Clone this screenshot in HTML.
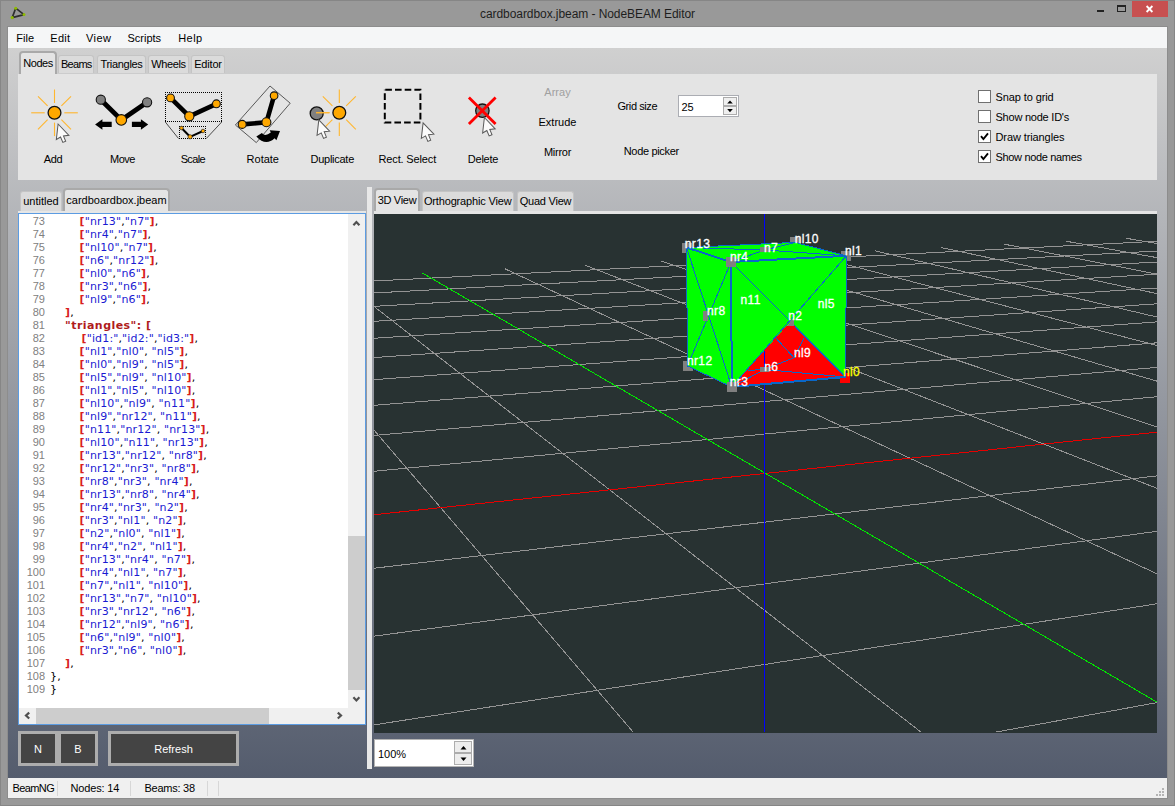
<!DOCTYPE html>
<html lang="en"><head><meta charset="utf-8"><title>cardboardbox.jbeam - NodeBEAM Editor</title>
<style>
*{box-sizing:border-box}
html,body{margin:0;padding:0}
body{width:1175px;height:806px;overflow:hidden;background:#999999;font-family:"Liberation Sans",sans-serif;font-size:11px;color:#000;position:relative;line-height:13px}
.abs{position:absolute}
#frame{left:0;top:0;width:1175px;height:806px;border:1px solid #868686;pointer-events:none}
#title{left:0;top:7px;width:1175px;text-align:center;font-size:12px;line-height:15px;color:#1e1e1e;letter-spacing:-0.07px}
#close{left:1132px;top:1px;width:36px;height:16px;background:#c75050}
#menubar{left:8px;top:27px;width:1159px;height:21px;background:#f5f6f7}
#menubar span{position:absolute;top:5px;font-size:11px}
#central{left:8px;top:48px;width:1159px;height:730px;background:linear-gradient(#d0d0d0,#545c6d)}
#status{left:8px;top:778px;width:1159px;height:20px;background:#f0f0f0}
#status span{position:absolute;top:4px}
#status i.gd{width:2px;height:2px;background:#b4b4b4;top:auto}
#status i{position:absolute;top:3px;width:1px;height:15px;background:#d7d7d7}
/* top tab widget */
.tab{position:absolute;border:1px solid #c4c4c4;border-bottom:none;border-radius:3px 3px 0 0;background:#dbdbdb;text-align:center;white-space:nowrap}
.tab.sel{background:#e4e4e4;border:2px solid #a9a9a9;border-bottom:none;border-radius:4px 4px 0 0}
#pane{left:18px;top:74px;width:1139px;height:106px;background:#e4e4e4}
.tl{position:absolute;text-align:center;white-space:nowrap;width:100px;line-height:13px}
.sb{width:14px;height:9px;border:1px solid #acacac;background:#efefef}
.cb{position:absolute;width:13px;height:13px;background:#fff;border:1px solid #707070}
.cbl{position:absolute;white-space:nowrap}
/* editor */
#editor{left:18px;top:213px;width:348px;height:512px;background:#fff;border:1px solid #5c9ce2;overflow:hidden}
.ln{position:absolute;left:0;height:13px;width:330px;white-space:pre;font-family:"DejaVu Sans","Liberation Sans",sans-serif;font-size:11px;line-height:13px;letter-spacing:0.15px}
.no{position:absolute;left:0;width:26px;text-align:right;color:#808080;font-family:"Liberation Sans",sans-serif;font-size:11px;letter-spacing:0}
.ct{position:absolute;top:0}
.s{color:#1a1ad2}
.br{color:#d81e1e}
.k{color:#b01c1c;letter-spacing:0.45px}
.sb2{width:18px;border:1px solid #adadad;background:#ededed}
.dbtn{position:absolute;background:#444;border:3px solid #adadad;color:#fff;text-align:center;line-height:31px;height:35px;top:731px}
#view{left:374px;top:214px;width:783px;height:519px;background:#283232;overflow:hidden}
</style></head>
<body>
<div class="abs" id="title">cardboardbox.jbeam - NodeBEAM Editor</div>
<svg class="abs" style="left:10px;top:5px" width="18" height="16" viewBox="0 0 18 16">
<path d="M5.7 3.2 L14 9.6 L2.2 12.6 Z" fill="none" stroke="#2e2e2e" stroke-width="1.7" stroke-linejoin="round"/>
<circle cx="5.7" cy="3.2" r="1.5" fill="#8fbc00"/><circle cx="14" cy="9.6" r="1.5" fill="#8fbc00"/><circle cx="2.2" cy="12.6" r="1.6" fill="#8fbc00"/>
</svg>
<div class="abs" style="left:1097px;top:10px;width:7px;height:2px;background:#222"></div>
<div class="abs" style="left:1117px;top:5px;width:9px;height:7px;border:1px solid #222;border-top-width:2px"></div>
<div class="abs" id="close"><svg width="36" height="16" viewBox="0 0 36 16"><path d="M14.6 5 L20.4 11 M20.4 5 L14.6 11" stroke="#fff" stroke-width="1.8"/></svg></div>

<div class="abs" style="left:7px;top:26px;width:1161px;height:773px;background:#8d8d8d"></div>
<div class="abs" id="menubar">
<span style="left:8.3px">File</span><span style="left:42.3px;letter-spacing:0.25px">Edit</span><span style="left:78px;letter-spacing:0.45px">View</span><span style="left:119.5px">Scripts</span><span style="left:170.2px;letter-spacing:0.45px">Help</span>
</div>
<div class="abs" id="central"></div>

<!-- top tabs -->
<div class="tab sel" style="left:19px;top:51px;width:38px;height:23px;line-height:20px;letter-spacing:-0.48px">Nodes</div>
<div class="tab" style="left:58.3px;top:55px;width:36px;height:18px;line-height:17px;letter-spacing:-0.7px">Beams</div>
<div class="tab" style="left:97px;top:55px;width:49px;height:18px;line-height:17px;letter-spacing:-0.3px">Triangles</div>
<div class="tab" style="left:148px;top:55px;width:41px;height:18px;line-height:17px;letter-spacing:-0.37px">Wheels</div>
<div class="tab" style="left:191px;top:55px;width:34px;height:18px;line-height:17px;letter-spacing:-0.17px">Editor</div>
<div class="abs" id="pane">
<svg class="abs" style="left:0;top:0" width="1139" height="106" viewBox="18 74 1139 106">
<g stroke="#ffb62e" stroke-width="1.1"><line x1="64.3" y1="112.8" x2="77.8" y2="112.8"/><line x1="61.4" y1="119.7" x2="71.0" y2="129.3"/><line x1="54.5" y1="122.6" x2="54.5" y2="136.1"/><line x1="47.6" y1="119.7" x2="38.0" y2="129.3"/><line x1="44.7" y1="112.8" x2="31.2" y2="112.8"/><line x1="47.6" y1="105.9" x2="38.0" y2="96.3"/><line x1="54.5" y1="103.0" x2="54.5" y2="89.5"/><line x1="61.4" y1="105.9" x2="71.0" y2="96.3"/></g>
<circle cx="54.5" cy="112.8" r="6.4" fill="#ffa800" stroke="#111" stroke-width="1.3"/>
<path transform="translate(58.1 124.0) rotate(6.5)" d="M0.00 0.00 L0.00 15.60 L3.90 12.60 L6.80 17.80 L9.50 16.30 L6.70 11.20 L12.00 10.00 Z" fill="#fbfbfb" stroke="#5a5a5a" stroke-width="1" stroke-linejoin="miter"/>
<path d="M100.8 99.7 L121.3 119.9 L147.1 102.3" fill="none" stroke="#000" stroke-width="4.8" stroke-linejoin="round"/>
<circle cx="100.8" cy="99.7" r="4.6" fill="#808080" stroke="#111" stroke-width="1.1"/>
<circle cx="147.1" cy="102.3" r="4.6" fill="#808080" stroke="#111" stroke-width="1.1"/>
<circle cx="121.3" cy="119.9" r="5.3" fill="#ffa800" stroke="#111" stroke-width="1.1"/>
<path d="M95.1 124.4 L102.4 119.2 L102.4 121.8 L111.7 121.8 L111.7 127 L102.4 127 L102.4 129.8 Z" fill="#000"/>
<path d="M148.2 124.4 L140.9 119.2 L140.9 121.8 L131.9 121.8 L131.9 127 L140.9 127 L140.9 129.8 Z" fill="#000"/>
<path d="M165 92.5 H222 M165 121.5 H222 M165.5 92 V122 M221.5 92 V122" fill="none" stroke="#000" stroke-width="1" stroke-dasharray="1 1" shape-rendering="crispEdges"/>
<path d="M165.3 122 L178.5 138.5 M221.7 122 L206.3 138.5" stroke="#222" stroke-width="0.8" fill="none"/>
<path d="M179 126.5 H206 M179 138.5 H206 M179.5 126 V139 M205.5 126 V139" fill="none" stroke="#000" stroke-width="1" stroke-dasharray="1 1" shape-rendering="crispEdges"/>
<path d="M170.5 97.9 L189.3 116.3 L216.4 103.8" fill="none" stroke="#000" stroke-width="4.6" stroke-linejoin="round"/>
<circle cx="170.5" cy="97.9" r="3.9" fill="#ffa800" stroke="#111" stroke-width="1.1"/>
<circle cx="216.4" cy="103.8" r="3.9" fill="#ffa800" stroke="#111" stroke-width="1.1"/>
<circle cx="189.3" cy="116.3" r="4.6" fill="#ffa800" stroke="#111" stroke-width="1.1"/>
<path d="M181.5 128 L190.1 136.8 L203 131" fill="none" stroke="#000" stroke-width="2" stroke-linejoin="round"/>
<circle cx="181.5" cy="128.0" r="1.8" fill="#ffa800" stroke="#111" stroke-width="0.6"/>
<circle cx="203.0" cy="131.0" r="1.8" fill="#ffa800" stroke="#111" stroke-width="0.6"/>
<circle cx="190.1" cy="136.8" r="2.1" fill="#ffa800" stroke="#111" stroke-width="0.6"/>
<path d="M270 86 L290.2 103.2 L256.3 142.6 L235.4 125 Z" fill="none" stroke="#333" stroke-width="0.8"/>
<path d="M274.1 95.7 L266.4 122.3 L242.2 124.4" fill="none" stroke="#000" stroke-width="4.6" stroke-linejoin="round"/>
<circle cx="274.1" cy="95.7" r="3.8" fill="#ffa800" stroke="#111" stroke-width="1.1"/>
<circle cx="266.4" cy="122.3" r="4.5" fill="#ffa800" stroke="#111" stroke-width="1.1"/>
<circle cx="242.2" cy="124.4" r="4.0" fill="#ffa800" stroke="#111" stroke-width="1.1"/>
<path d="M256.3 136.4 L261.9 133 Q264.85 137 270.8 132.6 L269.7 130.2 L280 131 L276.4 140.3 L274.6 138.2 Q265.75 146.6 256.3 136.4 Z" fill="#000"/>
<circle cx="316.7" cy="113.4" r="6.5" fill="#808080" stroke="#111" stroke-width="1.3"/>
<g stroke="#ffb62e" stroke-width="1.1"><line x1="346.2" y1="119.7" x2="355.8" y2="129.3"/><line x1="339.3" y1="122.6" x2="339.3" y2="136.1"/><line x1="332.4" y1="119.7" x2="322.8" y2="129.3"/><line x1="329.5" y1="112.8" x2="316.0" y2="112.8"/><line x1="332.4" y1="105.9" x2="322.8" y2="96.3"/><line x1="339.3" y1="103.0" x2="339.3" y2="89.5"/><line x1="346.2" y1="105.9" x2="355.8" y2="96.3"/></g>
<line x1="316.2" y1="112.6" x2="329.6" y2="112.6" stroke="#ffb62e" stroke-width="1.1"/>
<circle cx="339.3" cy="112.8" r="6.4" fill="#ffa800" stroke="#111" stroke-width="1.3"/>
<path transform="translate(318.8 119.9) rotate(6.5)" d="M0.00 0.00 L0.00 15.60 L3.90 12.60 L6.80 17.80 L9.50 16.30 L6.70 11.20 L12.00 10.00 Z" fill="#fbfbfb" stroke="#5a5a5a" stroke-width="1" stroke-linejoin="miter"/>
<rect x="384.8" y="89.7" width="35.6" height="32.8" fill="none" stroke="#000" stroke-width="2" stroke-dasharray="6.6 3.1" stroke-dashoffset="-0.5"/>
<path transform="translate(423.1 122.9) rotate(6.5)" d="M0.00 0.00 L0.00 15.60 L3.90 12.60 L6.80 17.80 L9.50 16.30 L6.70 11.20 L12.00 10.00 Z" fill="#fbfbfb" stroke="#5a5a5a" stroke-width="1" stroke-linejoin="miter"/>
<circle cx="482.4" cy="110.7" r="6.7" fill="#808080" stroke="#111" stroke-width="1.3"/>
<path d="M468.9 97.5 L495.6 124 M495.6 97.5 L468.9 124" stroke="#ff0000" stroke-width="2.8"/>
<path transform="translate(484.4 117.5) rotate(6.5)" d="M0.00 0.00 L0.00 15.60 L3.90 12.60 L6.80 17.80 L9.50 16.30 L6.70 11.20 L12.00 10.00 Z" fill="#fbfbfb" stroke="#5a5a5a" stroke-width="1" stroke-linejoin="miter"/>
</svg>
<div class="tl" style="left:-14.9px;top:78.8px;width:100px;letter-spacing:-0.3px">Add</div>
<div class="tl" style="left:54.5px;top:78.8px;width:100px;letter-spacing:-0.5px">Move</div>
<div class="tl" style="left:124.9px;top:78.8px;width:100px;letter-spacing:-0.6px">Scale</div>
<div class="tl" style="left:194.8px;top:78.8px;width:100px">Rotate</div>
<div class="tl" style="left:264.3px;top:78.8px;width:100px;letter-spacing:-0.27px">Duplicate</div>
<div class="tl" style="left:339.3px;top:78.8px;width:100px;letter-spacing:-0.15px">Rect. Select</div>
<div class="tl" style="left:415.0px;top:78.8px;width:100px;letter-spacing:-0.25px">Delete</div>
<div class="tl" style="left:489.5px;top:11.6px;width:100px;color:#a0a0a0">Array</div>
<div class="tl" style="left:489.5px;top:41.8px;width:100px">Extrude</div>
<div class="tl" style="left:489.5px;top:71.7px;width:100px;letter-spacing:-0.27px">Mirror</div>
<div class="tl" style="left:569.3px;top:26.0px;width:100px;letter-spacing:-0.42px">Grid size</div>
<div class="tl" style="left:583.3px;top:71.0px;width:100px;letter-spacing:-0.33px">Node picker</div>
<div class="abs" style="left:660px;top:21px;width:61px;height:22px;background:#fff;border:1px solid #abadb3"><span class="abs" style="left:2.5px;top:5px">25</span><div class="abs sb" style="left:44px;top:1px"><svg width="12" height="7" style="display:block"><path d="M3.2 5.6 L6 2.4 L8.8 5.6 Z" fill="#000"/></svg></div><div class="abs sb" style="left:44px;top:10px"><svg width="12" height="7" style="display:block"><path d="M3.2 2 L6 5.2 L8.8 2 Z" fill="#000"/></svg></div></div>
<div class="cb" style="left:960px;top:16px"></div><div class="cbl" style="left:977.5px;top:17px;letter-spacing:-0.1px">Snap to grid</div>
<div class="cb" style="left:960px;top:36px"></div><div class="cbl" style="left:977.5px;top:37px;letter-spacing:-0.23px">Show node ID's</div>
<div class="cb" style="left:960px;top:56px"><svg width="11" height="11" style="position:absolute;left:0;top:0"><path d="M2 5.2 L4.4 8 L9 2.4" fill="none" stroke="#000" stroke-width="1.9"/></svg></div><div class="cbl" style="left:977.5px;top:57px;letter-spacing:-0.1px">Draw triangles</div>
<div class="cb" style="left:960px;top:76px"><svg width="11" height="11" style="position:absolute;left:0;top:0"><path d="M2 5.2 L4.4 8 L9 2.4" fill="none" stroke="#000" stroke-width="1.9"/></svg></div><div class="cbl" style="left:977.5px;top:77px;letter-spacing:-0.33px">Show node names</div>
</div>

<!-- editor tabs -->
<div class="tab" style="left:20px;top:191px;width:42px;height:20px;line-height:18px">untitled</div>
<div class="tab sel" style="left:63px;top:188px;width:107px;height:24px;line-height:21px">cardboardbox.jbeam</div>
<div class="abs" id="editor">
<div class="ln" style="top:1px"><span class="no">73</span><span class="ct" style="left:60.5px"><b class="br">[</b><span class="s">"nr13"</span>,<span class="s">"n7"</span><b class="br">]</b>,</span></div>
<div class="ln" style="top:14px"><span class="no">74</span><span class="ct" style="left:60.5px"><b class="br">[</b><span class="s">"nr4"</span>,<span class="s">"n7"</span><b class="br">]</b>,</span></div>
<div class="ln" style="top:27px"><span class="no">75</span><span class="ct" style="left:60.5px"><b class="br">[</b><span class="s">"nl10"</span>,<span class="s">"n7"</span><b class="br">]</b>,</span></div>
<div class="ln" style="top:40px"><span class="no">76</span><span class="ct" style="left:60.5px"><b class="br">[</b><span class="s">"n6"</span>,<span class="s">"nr12"</span><b class="br">]</b>,</span></div>
<div class="ln" style="top:53px"><span class="no">77</span><span class="ct" style="left:60.5px"><b class="br">[</b><span class="s">"nl0"</span>,<span class="s">"n6"</span><b class="br">]</b>,</span></div>
<div class="ln" style="top:66px"><span class="no">78</span><span class="ct" style="left:60.5px"><b class="br">[</b><span class="s">"nr3"</span>,<span class="s">"n6"</span><b class="br">]</b>,</span></div>
<div class="ln" style="top:79px"><span class="no">79</span><span class="ct" style="left:60.5px"><b class="br">[</b><span class="s">"nl9"</span>,<span class="s">"n6"</span><b class="br">]</b>,</span></div>
<div class="ln" style="top:92px"><span class="no">80</span><span class="ct" style="left:46.0px"><b class="br">]</b>,</span></div>
<div class="ln" style="top:105px"><span class="no">81</span><span class="ct" style="left:46.0px"><b class="k">"triangles": [</b></span></div>
<div class="ln" style="top:118px"><span class="no">82</span><span class="ct" style="left:62.5px"><b class="br">[</b><span class="s">"id1:"</span>,<span class="s">"id2:"</span>,<span class="s">"id3:"</span><b class="br">]</b>,</span></div>
<div class="ln" style="top:131px"><span class="no">83</span><span class="ct" style="left:60.5px"><b class="br">[</b><span class="s">"nl1"</span>,<span class="s">"nl0"</span>, <span class="s">"nl5"</span><b class="br">]</b>,</span></div>
<div class="ln" style="top:144px"><span class="no">84</span><span class="ct" style="left:60.5px"><b class="br">[</b><span class="s">"nl0"</span>,<span class="s">"nl9"</span>, <span class="s">"nl5"</span><b class="br">]</b>,</span></div>
<div class="ln" style="top:157px"><span class="no">85</span><span class="ct" style="left:60.5px"><b class="br">[</b><span class="s">"nl5"</span>,<span class="s">"nl9"</span>, <span class="s">"nl10"</span><b class="br">]</b>,</span></div>
<div class="ln" style="top:170px"><span class="no">86</span><span class="ct" style="left:60.5px"><b class="br">[</b><span class="s">"nl1"</span>,<span class="s">"nl5"</span>, <span class="s">"nl10"</span><b class="br">]</b>,</span></div>
<div class="ln" style="top:183px"><span class="no">87</span><span class="ct" style="left:60.5px"><b class="br">[</b><span class="s">"nl10"</span>,<span class="s">"nl9"</span>, <span class="s">"n11"</span><b class="br">]</b>,</span></div>
<div class="ln" style="top:196px"><span class="no">88</span><span class="ct" style="left:60.5px"><b class="br">[</b><span class="s">"nl9"</span>,<span class="s">"nr12"</span>, <span class="s">"n11"</span><b class="br">]</b>,</span></div>
<div class="ln" style="top:209px"><span class="no">89</span><span class="ct" style="left:60.5px"><b class="br">[</b><span class="s">"n11"</span>,<span class="s">"nr12"</span>, <span class="s">"nr13"</span><b class="br">]</b>,</span></div>
<div class="ln" style="top:222px"><span class="no">90</span><span class="ct" style="left:60.5px"><b class="br">[</b><span class="s">"nl10"</span>,<span class="s">"n11"</span>, <span class="s">"nr13"</span><b class="br">]</b>,</span></div>
<div class="ln" style="top:235px"><span class="no">91</span><span class="ct" style="left:60.5px"><b class="br">[</b><span class="s">"nr13"</span>,<span class="s">"nr12"</span>, <span class="s">"nr8"</span><b class="br">]</b>,</span></div>
<div class="ln" style="top:248px"><span class="no">92</span><span class="ct" style="left:60.5px"><b class="br">[</b><span class="s">"nr12"</span>,<span class="s">"nr3"</span>, <span class="s">"nr8"</span><b class="br">]</b>,</span></div>
<div class="ln" style="top:261px"><span class="no">93</span><span class="ct" style="left:60.5px"><b class="br">[</b><span class="s">"nr8"</span>,<span class="s">"nr3"</span>, <span class="s">"nr4"</span><b class="br">]</b>,</span></div>
<div class="ln" style="top:274px"><span class="no">94</span><span class="ct" style="left:60.5px"><b class="br">[</b><span class="s">"nr13"</span>,<span class="s">"nr8"</span>, <span class="s">"nr4"</span><b class="br">]</b>,</span></div>
<div class="ln" style="top:287px"><span class="no">95</span><span class="ct" style="left:60.5px"><b class="br">[</b><span class="s">"nr4"</span>,<span class="s">"nr3"</span>, <span class="s">"n2"</span><b class="br">]</b>,</span></div>
<div class="ln" style="top:300px"><span class="no">96</span><span class="ct" style="left:60.5px"><b class="br">[</b><span class="s">"nr3"</span>,<span class="s">"nl1"</span>, <span class="s">"n2"</span><b class="br">]</b>,</span></div>
<div class="ln" style="top:313px"><span class="no">97</span><span class="ct" style="left:60.5px"><b class="br">[</b><span class="s">"n2"</span>,<span class="s">"nl0"</span>, <span class="s">"nl1"</span><b class="br">]</b>,</span></div>
<div class="ln" style="top:326px"><span class="no">98</span><span class="ct" style="left:60.5px"><b class="br">[</b><span class="s">"nr4"</span>,<span class="s">"n2"</span>, <span class="s">"nl1"</span><b class="br">]</b>,</span></div>
<div class="ln" style="top:339px"><span class="no">99</span><span class="ct" style="left:60.5px"><b class="br">[</b><span class="s">"nr13"</span>,<span class="s">"nr4"</span>, <span class="s">"n7"</span><b class="br">]</b>,</span></div>
<div class="ln" style="top:352px"><span class="no">100</span><span class="ct" style="left:60.5px"><b class="br">[</b><span class="s">"nr4"</span>,<span class="s">"nl1"</span>, <span class="s">"n7"</span><b class="br">]</b>,</span></div>
<div class="ln" style="top:365px"><span class="no">101</span><span class="ct" style="left:60.5px"><b class="br">[</b><span class="s">"n7"</span>,<span class="s">"nl1"</span>, <span class="s">"nl10"</span><b class="br">]</b>,</span></div>
<div class="ln" style="top:378px"><span class="no">102</span><span class="ct" style="left:60.5px"><b class="br">[</b><span class="s">"nr13"</span>,<span class="s">"n7"</span>, <span class="s">"nl10"</span><b class="br">]</b>,</span></div>
<div class="ln" style="top:391px"><span class="no">103</span><span class="ct" style="left:60.5px"><b class="br">[</b><span class="s">"nr3"</span>,<span class="s">"nr12"</span>, <span class="s">"n6"</span><b class="br">]</b>,</span></div>
<div class="ln" style="top:404px"><span class="no">104</span><span class="ct" style="left:60.5px"><b class="br">[</b><span class="s">"nr12"</span>,<span class="s">"nl9"</span>, <span class="s">"n6"</span><b class="br">]</b>,</span></div>
<div class="ln" style="top:417px"><span class="no">105</span><span class="ct" style="left:60.5px"><b class="br">[</b><span class="s">"n6"</span>,<span class="s">"nl9"</span>, <span class="s">"nl0"</span><b class="br">]</b>,</span></div>
<div class="ln" style="top:430px"><span class="no">106</span><span class="ct" style="left:60.5px"><b class="br">[</b><span class="s">"nr3"</span>,<span class="s">"n6"</span>, <span class="s">"nl0"</span><b class="br">]</b>,</span></div>
<div class="ln" style="top:443px"><span class="no">107</span><span class="ct" style="left:46.0px"><b class="br">]</b>,</span></div>
<div class="ln" style="top:456px"><span class="no">108</span><span class="ct" style="left:31.0px">},</span></div>
<div class="ln" style="top:469px"><span class="no">109</span><span class="ct" style="left:31.0px">}</span></div>
<div class="abs" id="vsb" style="left:329px;top:0;width:17px;height:494px;background:#f0f0f0">
 <div class="abs" style="left:0;top:322px;width:17px;height:154px;background:#cdcdcd"></div>
 <svg class="abs" style="left:0;top:0" width="17" height="17"><path d="M5.4 11.2 L8.4 8 L11.4 11.2" fill="none" stroke="#505050" stroke-width="2.2"/></svg>
 <svg class="abs" style="left:0;top:476px" width="17" height="17"><path d="M5.4 7.2 L8.4 10.4 L11.4 7.2" fill="none" stroke="#505050" stroke-width="2.2"/></svg>
</div>
<div class="abs" id="hsb" style="left:0;top:494px;width:329px;height:16px;background:#f0f0f0">
 <div class="abs" style="left:17px;top:0;width:233px;height:16px;background:#cdcdcd"></div>
 <svg class="abs" style="left:0;top:-1px" width="17" height="17"><path d="M10.2 5.6 L7 8.55 L10.2 11.5" fill="none" stroke="#505050" stroke-width="2.2"/></svg>
 <svg class="abs" style="left:312px;top:-1px" width="17" height="17"><path d="M6.8 5.6 L10 8.55 L6.8 11.5" fill="none" stroke="#505050" stroke-width="2.2"/></svg>
</div>
<div class="abs" style="left:329px;top:494px;width:17px;height:16px;background:#f0f0f0"></div>
</div>
<div class="dbtn" style="left:18px;width:40px">N</div>
<div class="dbtn" style="left:58px;width:40px">B</div>
<div class="dbtn" style="left:108px;width:131px">Refresh</div>

<!-- splitter -->
<div class="abs" style="left:367px;top:187px;width:5px;height:582px;background:#e8e8e8"></div>
<div class="abs" style="left:18px;top:211px;width:348px;height:2px;background:#e6e6e6"></div>

<!-- view tabs -->
<div class="tab sel" style="left:374px;top:188px;width:46px;height:24px;line-height:21px;letter-spacing:-0.3px">3D View</div>
<div class="tab" style="left:421.5px;top:191px;width:92.5px;height:20px;line-height:18px;letter-spacing:-0.15px">Orthographic View</div>
<div class="tab" style="left:517px;top:191px;width:57px;height:20px;line-height:18px;letter-spacing:-0.22px">Quad View</div>
<div class="abs" style="left:374px;top:211px;width:783px;height:3px;background:#e4e4e4"></div>
<div class="abs" id="view">
<svg width="783" height="518" viewBox="0 0 783 518" style="position:absolute;left:0;top:0">
<g stroke="#949494" stroke-width="1" shape-rendering="crispEdges">
<line x1="-1006.0" y1="111.1" x2="-9176.1" y2="3283.8"/>
<line x1="-1095.3" y1="122.5" x2="802.1" y2="26.3"/>
<line x1="-877.4" y1="104.7" x2="-7698.3" y2="3285.8"/>
<line x1="-1144.8" y1="140.2" x2="847.2" y2="33.6"/>
<line x1="-755.0" y1="98.7" x2="-6220.5" y2="3287.8"/>
<line x1="-1201.1" y1="160.3" x2="896.2" y2="41.6"/>
<line x1="-638.2" y1="92.9" x2="-4742.7" y2="3289.8"/>
<line x1="-1265.5" y1="183.4" x2="949.5" y2="50.2"/>
<line x1="-526.7" y1="87.4" x2="-3264.9" y2="3291.8"/>
<line x1="-1340.1" y1="210.2" x2="1007.6" y2="59.6"/>
<line x1="-420.2" y1="82.1" x2="-1787.1" y2="3293.8"/>
<line x1="-1427.5" y1="241.5" x2="1071.4" y2="70.0"/>
<line x1="-318.3" y1="77.1" x2="-309.4" y2="3295.8"/>
<line x1="-1531.3" y1="278.7" x2="1141.6" y2="81.4"/>
<line x1="-220.8" y1="72.3" x2="1168.4" y2="3297.7"/>
<line x1="-1656.4" y1="323.5" x2="1219.2" y2="94.0"/>
<line x1="-127.3" y1="67.7" x2="2646.2" y2="3299.7"/>
<line x1="-1810.4" y1="378.7" x2="1305.6" y2="108.0"/>
<line x1="-37.6" y1="63.2" x2="4124.0" y2="3301.7"/>
<line x1="-2004.5" y1="448.2" x2="1402.2" y2="123.7"/>
<line x1="48.5" y1="59.0" x2="5601.8" y2="3303.7"/>
<line x1="-2256.7" y1="538.6" x2="1511.0" y2="141.4"/>
<line x1="131.2" y1="54.9" x2="7079.6" y2="3305.7"/>
<line x1="-2597.5" y1="660.7" x2="1634.6" y2="161.4"/>
<line x1="210.7" y1="51.0" x2="7086.7" y2="2733.9"/>
<line x1="-3083.9" y1="835.0" x2="1776.0" y2="184.4"/>
<line x1="287.3" y1="47.2" x2="6490.3" y2="2123.3"/>
<line x1="-3834.2" y1="1103.9" x2="1939.5" y2="210.9"/>
<line x1="361.0" y1="43.5" x2="6102.4" y2="1726.1"/>
<line x1="-5143.5" y1="1573.1" x2="2130.7" y2="242.0"/>
<line x1="432.0" y1="40.0" x2="5829.9" y2="1447.1"/>
<line x1="-8007.1" y1="2599.2" x2="2357.3" y2="278.8"/>
<line x1="500.5" y1="36.7" x2="5627.9" y2="1240.3"/>
<line x1="-7653.9" y1="3285.9" x2="2630.0" y2="323.0"/>
<line x1="566.6" y1="33.4" x2="5472.3" y2="1081.0"/>
<line x1="-4254.0" y1="3290.4" x2="2964.7" y2="377.4"/>
<line x1="630.4" y1="30.2" x2="5348.7" y2="954.4"/>
<line x1="-854.0" y1="3295.0" x2="3385.0" y2="445.6"/>
<line x1="692.1" y1="27.2" x2="5248.1" y2="851.4"/>
<line x1="2546.0" y1="3299.6" x2="3928.7" y2="533.9"/>
<line x1="751.7" y1="24.2" x2="5164.7" y2="766.0"/>
<line x1="5946.0" y1="3304.2" x2="4659.5" y2="652.5"/>
</g>
<g stroke-width="1" shape-rendering="crispEdges">
<line x1="-2256.7" y1="538.6" x2="1511.0" y2="141.4" stroke="#e60000"/><line x1="48.5" y1="59.0" x2="5601.8" y2="3303.7" stroke="#00e600"/>
</g>
<g transform="translate(-374 -214)" shape-rendering="crispEdges">
<line x1="764.5" y1="214" x2="764.5" y2="732" stroke="#0000ff" stroke-width="1"/>
<rect x="681.5" y="242.5" width="10" height="10" fill="#808080"/>
<rect x="790.3" y="237.4" width="10" height="10" fill="#808080"/>
<rect x="841.4" y="250.8" width="10" height="10" fill="#808080"/>
<rect x="682.5" y="361.0" width="10" height="10" fill="#808080"/>
<rect x="840" y="373" width="10" height="10" fill="#ff0000"/>
<polygon points="686.5,247.5 795.3,242.4 846.4,255.8 731.0,262.0" fill="#00ff00"/>
<polygon points="686.5,247.5 731.0,262.0 731.8,387.0 687.5,366.0" fill="#00ff00"/>
<polygon points="731.0,262.0 846.4,255.8 845.5,377.0 731.8,387.0" fill="#00ff00"/>
<polygon points="790.5,321.5 845.5,377.0 731.8,387.0" fill="#ff0000"/>
<line x1="764.5" y1="350.5" x2="764.5" y2="367" stroke="#0000ff" stroke-width="1"/>
<g stroke="#0a68c8">
<line x1="846.4" y1="255.8" x2="731.0" y2="262.0" stroke-width="2"/>
<line x1="731.0" y1="262.0" x2="686.5" y2="247.5" stroke-width="2"/>
<line x1="731.0" y1="262.0" x2="731.8" y2="387.0" stroke-width="2"/>
<line x1="731.8" y1="387.0" x2="845.5" y2="377.0" stroke-width="2"/>
<line x1="686.5" y1="247.5" x2="795.3" y2="242.4" stroke-width="1"/>
<line x1="795.3" y1="242.4" x2="846.4" y2="255.8" stroke-width="1"/>
<line x1="686.5" y1="247.5" x2="687.5" y2="366.0" stroke-width="1"/>
<line x1="846.4" y1="255.8" x2="845.5" y2="377.0" stroke-width="1"/>
<line x1="687.5" y1="366.0" x2="731.8" y2="387.0" stroke-width="1"/>
<line x1="686.5" y1="247.5" x2="731.8" y2="387.0" stroke-width="1"/>
<line x1="731.0" y1="262.0" x2="687.5" y2="366.0" stroke-width="1"/>
<line x1="731.0" y1="262.0" x2="845.5" y2="377.0" stroke-width="1"/>
<line x1="846.4" y1="255.8" x2="731.8" y2="387.0" stroke-width="1"/>
<line x1="764.5" y1="250.0" x2="686.5" y2="247.5" stroke-width="1"/>
<line x1="764.5" y1="250.0" x2="731.0" y2="262.0" stroke-width="1"/>
<line x1="764.5" y1="250.0" x2="795.3" y2="242.4" stroke-width="1"/>
<line x1="764.5" y1="250.0" x2="846.4" y2="255.8" stroke-width="1"/>
<line x1="793.9" y1="357.7" x2="776.2" y2="338.4" stroke-width="1"/>
<line x1="793.9" y1="357.7" x2="804.2" y2="338.0" stroke-width="1"/>
<line x1="793.9" y1="357.7" x2="764.5" y2="369.5" stroke-width="1"/>
<line x1="764.5" y1="369.5" x2="748.2" y2="370.4" stroke-width="1"/>
<line x1="764.5" y1="369.5" x2="731.8" y2="387.0" stroke-width="1"/>
<line x1="764.5" y1="369.5" x2="845.5" y2="377.0" stroke-width="1"/>
</g>
<rect x="726.0" y="257.0" width="10" height="10" fill="#808080"/>
<rect x="726.8" y="382.0" width="10" height="10" fill="#808080"/>
<rect x="760" y="247" width="9" height="5" fill="#808080"/>
<rect x="760" y="367" width="8.5" height="5" fill="#808080"/>
<rect x="703" y="311" width="4.5" height="10" fill="#808080"/>
<polygon points="787,325.5 794.2,325.5 794.2,317" fill="#808080"/>
</g>
<g transform="translate(-374 -214)" font-family="Liberation Sans, sans-serif" font-size="12px" fill="#ffffff" stroke="#ffffff" stroke-width="0.3" letter-spacing="0.35">
<text x="684.8" y="247.9">nr13</text>
<text x="729.9" y="260.6">nr4</text>
<text x="764.0" y="251.8">n7</text>
<text x="794.8" y="242.9">nl10</text>
<text x="844.9" y="255.1">nl1</text>
<text x="707.1" y="315.2">nr8</text>
<text x="740.6" y="303.6">n11</text>
<text x="817.7" y="307.6">nl5</text>
<text x="788.3" y="320.0">n2</text>
<text x="687.0" y="364.7">nr12</text>
<text x="764.3" y="370.8">n6</text>
<text x="793.9" y="356.5">nl9</text>
<text x="729.8" y="386.3">nr3</text>
<text x="843" y="376.1" fill="#ffff00" stroke="#ffff00">nl0</text>
</g>
</svg>
</div>
<!-- zoom spin -->
<div class="abs" style="left:374px;top:739px;width:100px;height:28px;background:#fff;border:1px solid #b4b4b4">
<span class="abs" style="left:3px;top:8px">100%</span>
<div class="abs sb2" style="left:79px;top:1px;height:12px"><svg width="16" height="10"><path d="M5.5 7.5 L8.5 4 L11.5 7.5 Z" fill="#000"/></svg></div>
<div class="abs sb2" style="left:79px;top:13px;height:12px"><svg width="16" height="10"><path d="M5.5 3.5 L8.5 7 L11.5 3.5 Z" fill="#000"/></svg></div>
</div>

<div class="abs" id="status">
<span style="left:4.5px;letter-spacing:-0.6px">BeamNG</span><i style="left:49px"></i>
<span style="left:62.5px;letter-spacing:-0.15px">Nodes: 14</span><i style="left:122px"></i>
<span style="left:136.5px;letter-spacing:-0.25px">Beams: 38</span><i style="left:199px"></i><i style="left:210px"></i>
<i class="gd" style="left:1154px;top:10px"></i><i class="gd" style="left:1151px;top:13px"></i><i class="gd" style="left:1154px;top:13px"></i><i class="gd" style="left:1148px;top:16px"></i><i class="gd" style="left:1151px;top:16px"></i><i class="gd" style="left:1154px;top:16px"></i>
</div>
<div class="abs" id="frame"></div>
</body></html>
